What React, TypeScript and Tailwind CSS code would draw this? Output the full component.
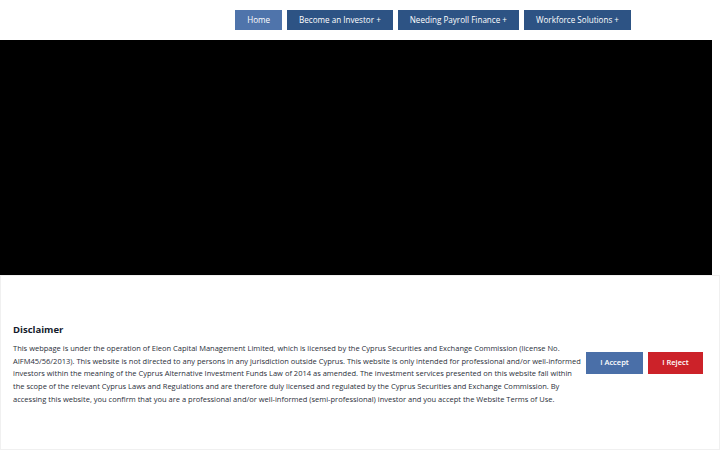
import React from "react";

const navItems = [
  { label: "Home", active: true },
  { label: "Become an Investor +", active: false },
  { label: "Needing Payroll Finance +", active: false },
  { label: "Workforce Solutions +", active: false },
];

export default function App() {
  return (
    <div
      className="w-[720px] h-[450px] bg-white overflow-hidden flex flex-col"
      style={{ fontFamily: '"Open Sans", "Liberation Sans", sans-serif' }}
    >
      {/* Header */}
      <header className="h-[40px] flex items-center justify-end pr-[89px] gap-[5px]">
        {navItems.map((item) => (
          <a
            key={item.label}
            className={
              item.active
                ? "h-[20px] px-[12px] flex items-center text-[8.1px] text-white bg-[#4f74ab]"
                : "h-[20px] px-[12px] flex items-center text-[8.1px] text-white bg-[#2d5384]"
            }
          >
            {item.label}
          </a>
        ))}
      </header>

      {/* Hero */}
      <div className="w-[712px] h-[235px] bg-black" />

      {/* Disclaimer */}
      <div className="flex-1 border border-[#f0f0f0] flex items-center pl-[12px] pr-[16px]">
        <div className="w-[570px] shrink-0 mt-[3px]">
          <h2 className="text-[9.5px] font-bold text-[#141b2d] mb-[5px]">Disclaimer</h2>
          <p className="text-[7.5px] leading-[12.6px] text-[#2a2f3a]">
            This webpage is under the operation of Eleon Capital Management Limited, which is licensed by the Cyprus Securities and Exchange Commission (license No. AIFM45/56/2013). This website is not directed to any persons in any jurisdiction outside Cyprus. This website is only intended for professional and/or well-informed investors within the meaning of the Cyprus Alternative Investment Funds Law of 2014 as amended. The investment services presented on this website fall within the scope of the relevant Cyprus Laws and Regulations and are therefore duly licensed and regulated by the Cyprus Securities and Exchange Commission. By accessing this website, you confirm that you are a professional and/or well-informed (semi-professional) investor and you accept the Website Terms of Use.
          </p>
        </div>
        <div className="ml-auto flex gap-[5px]">
          <button className="w-[57px] h-[22px] bg-[#4a6fa8] text-white text-[7.5px] font-semibold">I Accept</button>
          <button className="w-[55px] h-[22px] bg-[#cc2229] text-white text-[7.5px] font-semibold">I Reject</button>
        </div>
      </div>
    </div>
  );
}
